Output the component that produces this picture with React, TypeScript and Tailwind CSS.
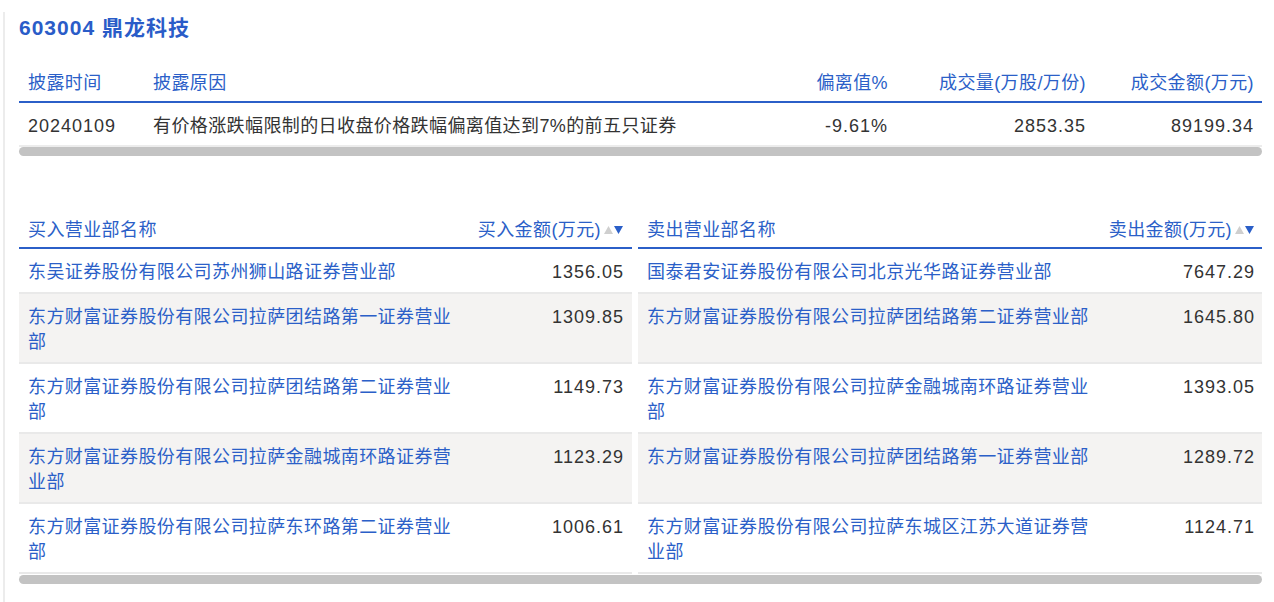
import React from "react";

type Deal = { name: string; amount: string };

const buys: Deal[] = [
  { name: "东吴证券股份有限公司苏州狮山路证券营业部", amount: "1356.05" },
  { name: "东方财富证券股份有限公司拉萨团结路第一证券营业部", amount: "1309.85" },
  { name: "东方财富证券股份有限公司拉萨团结路第二证券营业部", amount: "1149.73" },
  { name: "东方财富证券股份有限公司拉萨金融城南环路证券营业部", amount: "1123.29" },
  { name: "东方财富证券股份有限公司拉萨东环路第二证券营业部", amount: "1006.61" },
];

const sells: Deal[] = [
  { name: "国泰君安证券股份有限公司北京光华路证券营业部", amount: "7647.29" },
  { name: "东方财富证券股份有限公司拉萨团结路第二证券营业部", amount: "1645.80" },
  { name: "东方财富证券股份有限公司拉萨金融城南环路证券营业部", amount: "1393.05" },
  { name: "东方财富证券股份有限公司拉萨团结路第一证券营业部", amount: "1289.72" },
  { name: "东方财富证券股份有限公司拉萨东城区江苏大道证券营业部", amount: "1124.71" },
];

function SortArrows() {
  return (
    <svg width="20" height="10" viewBox="0 0 20 10" className="ml-[3px] shrink-0">
      <polygon points="0,9 4.5,1 9,9" fill="#cfcfcf" />
      <polygon points="10,1 19,1 14.5,9" fill="#2b5fc8" />
    </svg>
  );
}

function Thumb() {
  return <div className="h-[9px] rounded-full bg-[#c3c3c3]" />;
}

function HeadCell({ title, amountTitle, width, padRight }: { title: string; amountTitle: string; width: string; padRight: string }) {
  return (
    <div className={`flex h-[36px] items-center border-b-2 border-[#2b5fc8] text-[#2b5fc8] ${width}`}>
      <div className="flex-1 pl-[9px]">{title}</div>
      <div className={`flex items-center ${padRight}`}>
        <span>{amountTitle}</span>
        <SortArrows />
      </div>
    </div>
  );
}

function DealCell({ deal, width, nameWidth, padRight, shaded }: { deal: Deal; width: string; nameWidth: string; padRight: string; shaded: boolean }) {
  return (
    <div className={`flex items-start border-b-2 border-[#e9e9e9] pt-[11px] pb-[7px] ${width} ${shaded ? "bg-[#f4f3f2]" : "bg-white"}`}>
      <div className={`${nameWidth} pl-[9px] text-[#2b5fc8]`}>{deal.name}</div>
      <div className={`flex-1 text-right text-[#333] tracking-[1px] ${padRight}`}>{deal.amount}</div>
    </div>
  );
}

export default function App() {
  return (
    <div className="min-h-[602px] bg-white pl-[3px] text-[18px] leading-[25px] tracking-[0.4px] [font-family:'Liberation_Sans','Noto_Sans_CJK_SC',sans-serif]">
      <div className="mt-[12px] min-h-[590px] border-l-2 border-[#ececec] pr-[12px] pl-[14px]">
        <h1 className="h-[30px] text-[21px] leading-[31px] font-bold text-[#2a5cc8] tracking-[1px]">
          603004 鼎龙科技
        </h1>

        <div className="mt-[23px]">
          <div className="grid h-[38px] grid-cols-[125px_1fr_150px_198px_168px] items-center border-b-2 border-[#2b5fc8] text-[#2b5fc8]">
            <div className="pl-[9px]">披露时间</div>
            <div className="pl-[9px]">披露原因</div>
            <div className="pr-[8px] text-right">偏离值%</div>
            <div className="pr-[8px] text-right">成交量(万股/万份)</div>
            <div className="pr-[8px] text-right">成交金额(万元)</div>
          </div>
          <div className="grid grid-cols-[125px_1fr_150px_198px_168px] border-b-2 border-[#ececec] pt-[11px] pb-[6px] text-[#333]">
            <div className="pl-[9px] tracking-[1px]">20240109</div>
            <div className="pl-[9px]">有价格涨跌幅限制的日收盘价格跌幅偏离值达到7%的前五只证券</div>
            <div className="pr-[8px] text-right tracking-[1px]">-9.61%</div>
            <div className="pr-[8px] text-right tracking-[1px]">2853.35</div>
            <div className="pr-[8px] text-right tracking-[1px]">89199.34</div>
          </div>
          <Thumb />
        </div>

        <div className="mt-[57px]">
          <div className="flex gap-[6px]">
            <HeadCell title="买入营业部名称" amountTitle="买入金额(万元)" width="w-[613px]" padRight="pr-[8px]" />
            <HeadCell title="卖出营业部名称" amountTitle="卖出金额(万元)" width="w-[624px]" padRight="pr-[7px]" />
          </div>
          {buys.map((b, i) => (
            <div key={b.name + i} className="flex gap-[6px]">
              <DealCell deal={b} width="w-[613px]" nameWidth="w-[438px]" padRight="pr-[8px]" shaded={i % 2 === 1} />
              <DealCell deal={sells[i]} width="w-[624px]" nameWidth="w-[459px]" padRight="pr-[7px]" shaded={i % 2 === 1} />
            </div>
          ))}
          <div className="mt-[1px]">
            <Thumb />
          </div>
        </div>
      </div>
    </div>
  );
}
